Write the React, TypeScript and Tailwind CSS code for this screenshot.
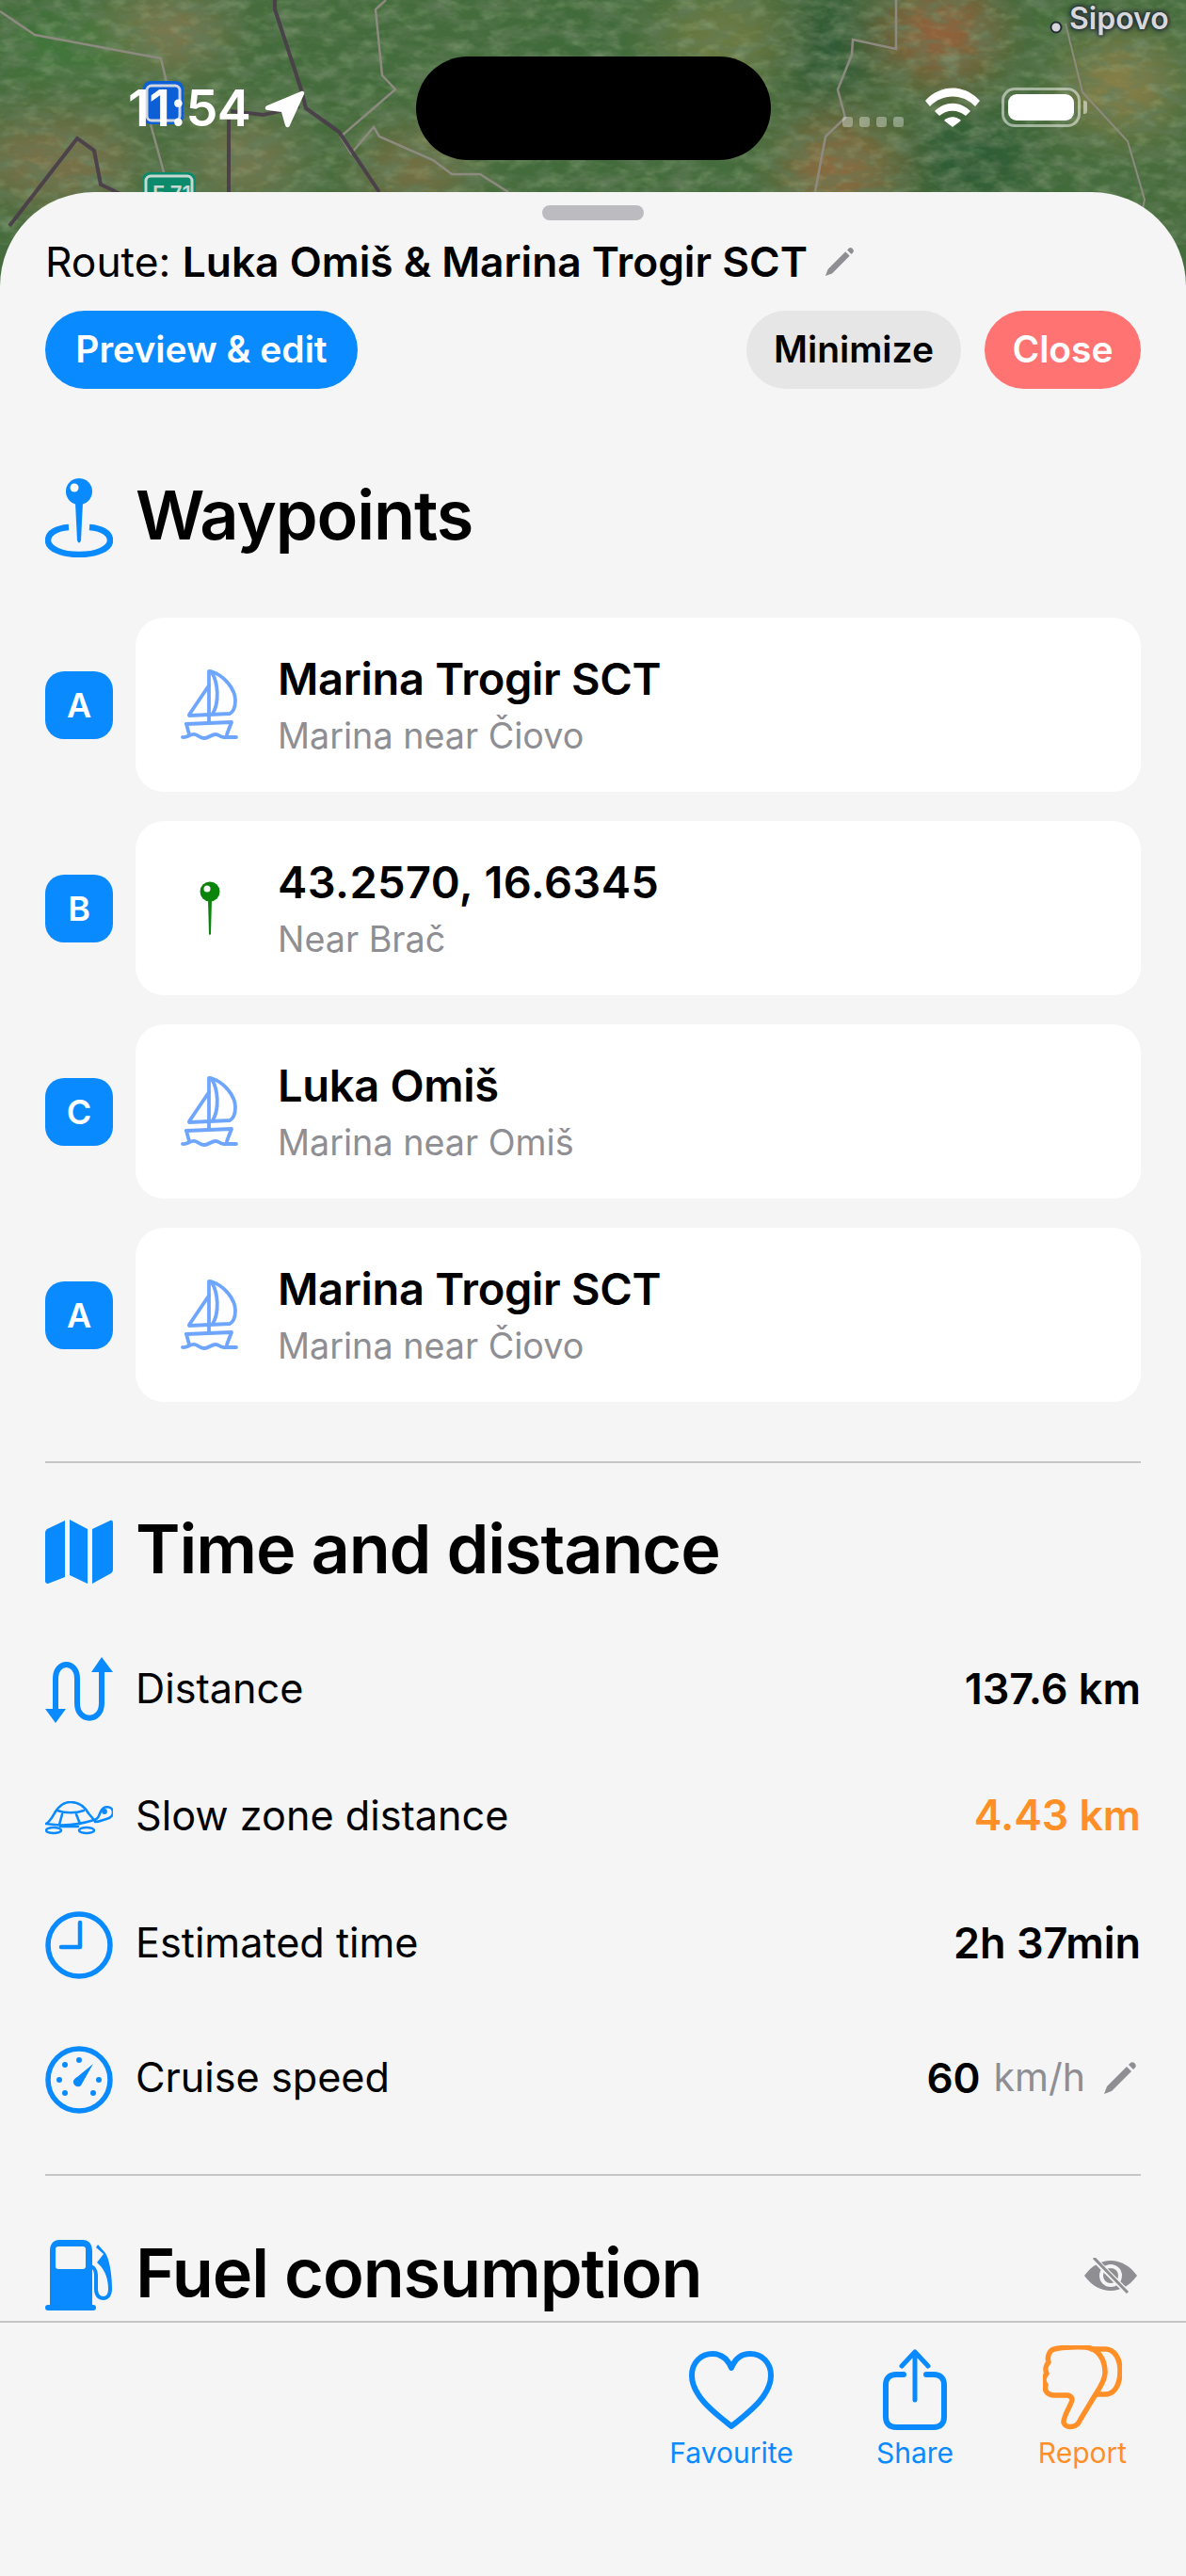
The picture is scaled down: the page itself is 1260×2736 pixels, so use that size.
const BLUE = "#0a8aff";

function MapBackdrop() {
  return (
    <svg className="absolute inset-0 h-[260px] w-full" viewBox="0 0 1260 260" preserveAspectRatio="none">
      <defs>
        <filter id="fine" x="0" y="0" width="100%" height="100%">
          <feTurbulence type="fractalNoise" baseFrequency="0.035 0.07" numOctaves="4" seed="7" />
          <feColorMatrix type="matrix" values="0 0 0 0 0.12  0 0 0 0 0.2  0 0 0 0 0.1  1.9 0 0 0 -0.72" />
        </filter>
        <filter id="light" x="0" y="0" width="100%" height="100%">
          <feTurbulence type="fractalNoise" baseFrequency="0.05 0.09" numOctaves="3" seed="21" />
          <feColorMatrix type="matrix" values="0 0 0 0 0.5  0 0 0 0 0.62  0 0 0 0 0.36  2 0 0 0 -0.95" />
        </filter>
        <filter id="soft">
          <feGaussianBlur stdDeviation="26" />
        </filter>
      </defs>
      <rect width="1260" height="260" fill="#446c3c" />
      <g filter="url(#soft)">
        <ellipse cx="170" cy="35" rx="70" ry="36" fill="#8a7a52" />
        <ellipse cx="60" cy="170" rx="90" ry="45" fill="#7d7148" />
        <ellipse cx="260" cy="170" rx="60" ry="40" fill="#7c7850" />
        <ellipse cx="80" cy="50" rx="80" ry="26" fill="#3f7a3a" />
        <ellipse cx="620" cy="90" rx="70" ry="90" fill="#3f6b3a" />
        <ellipse cx="770" cy="40" rx="70" ry="50" fill="#6d7a42" />
        <ellipse cx="1000" cy="35" rx="60" ry="50" fill="#96603a" />
        <ellipse cx="880" cy="50" rx="50" ry="70" fill="#2f5a36" />
        <ellipse cx="890" cy="180" rx="60" ry="50" fill="#8f6a40" />
        <ellipse cx="1030" cy="170" rx="70" ry="50" fill="#2f5b34" />
        <ellipse cx="1190" cy="90" rx="60" ry="50" fill="#8a8048" />
        <ellipse cx="1250" cy="200" rx="40" ry="40" fill="#4a6c3a" />
        <ellipse cx="440" cy="180" rx="60" ry="40" fill="#7a7044" />
      </g>
      <rect width="1260" height="260" filter="url(#fine)" />
      <rect width="1260" height="260" filter="url(#light)" opacity="0.3" />
      <g fill="none" stroke="#8d8a80" strokeWidth="2.5">
        <path d="M0 12 37 37 171 62 177 88M160 132 174 183" />
        <path d="M410 0 399 10 406 80 420 95 362 145 373 163 397 135 403 145 460 170 480 185 510 185 540 204" />
        <path d="M952 0V52L906 42 905 58 890 95 898 125 877 145 866 204" />
        <path d="M1132 25 1150 98 1198 150 1216 212 1210 240" strokeWidth="2" />
      </g>
      <g fill="none" stroke="#4a3c4a" strokeWidth="4" opacity="0.9">
        <path d="M292 0V10L320 95 325 115 360 140 403 204" />
        <path d="M245 118 280 122 318 113M243 125V204" />
        <path d="M10 240 82 147 100 160 107 196 130 207" />
      </g>
      <rect x="152" y="86" width="43" height="46" rx="8" fill="#0d5fd6" />
      <rect x="156" y="91" width="35" height="37" rx="5" fill="none" stroke="#cfd6e0" strokeWidth="3" />
      <rect x="151" y="183" width="57" height="40" rx="8" fill="#0b8b6c" />
      <rect x="155" y="187" width="49" height="32" rx="5" fill="none" stroke="#c8d8d2" strokeWidth="3" />
      <circle cx="1122" cy="29" r="5.5" fill="#d6d6da" stroke="#222c34" strokeWidth="2" />
    </svg>
  );
}

function StatusBar() {
  return (
    <>
      <div className="absolute left-[162px] top-[193px] text-[22px] leading-[24px] font-semibold text-[#c8d8d2]">E 71</div>
      <div className="absolute left-[136px] top-[90px] text-[54px] leading-[50px] font-semibold text-white tracking-[-0.5px]">11:54</div>
      <svg className="absolute left-[281px] top-[95px] h-[42px] w-[44px]" viewBox="0 0 44 42" fill="white">
        <path d="M3 17 39 2c2-1 4 1 3 3L27 38c-1 3-4 3-5 0l-4-14-15-2c-3 0-3-4 0-5Z" />
      </svg>
      <div className="absolute left-[1136px] top-[2px] text-[32px] leading-[36px] font-semibold text-[#d8d8dc] [text-shadow:0_0_4px_#222c34,0_0_4px_#222c34,0_0_6px_#222c34]">Sipovo</div>
      <div className="absolute left-[442px] top-[60px] h-[110px] w-[377px] rounded-[55px] bg-black" />
      <div className="absolute left-[895px] top-[124px] flex gap-[7px]">
        <div className="h-[11px] w-[11px] rounded-[3px] bg-white/35" />
        <div className="h-[11px] w-[11px] rounded-[3px] bg-white/35" />
        <div className="h-[11px] w-[11px] rounded-[3px] bg-white/35" />
        <div className="h-[11px] w-[11px] rounded-[3px] bg-white/35" />
      </div>
      <svg className="absolute left-[983px] top-[93px] h-[42px] w-[58px]" viewBox="0 0 58 42" fill="white">
        <path d="M0 14C16-4 42-4 58 14l-5 6C40 6 18 6 5 20Z" />
        <path d="M10 25c11-11 27-11 38 0l-5 5c-8-7-20-7-28 0Z" />
        <path d="M20 35c5-5 13-5 18 0l-9 7Z" />
      </svg>
      <div className="absolute left-[1064px] top-[93px] flex items-center gap-[3px]">
        <div className="h-[42px] w-[84px] rounded-[14px] border-[3px] border-white/50 p-[4px]">
          <div className="h-full w-full rounded-[9px] bg-white" />
        </div>
        <div className="h-[14px] w-[4px] rounded-r-[3px] bg-white/50" />
      </div>
    </>
  );
}

function Pencil({ className }: { className: string }) {
  return (
    <svg className={className} viewBox="0 0 36 36" fill="#8e8e93">
      <path d="M1 35 4 27 25 6 30 11 9 32Z" />
      <path d="M27 4 29 2c1-1 3-1 4 0l1 1c1 1 1 3 0 4l-2 2Z" />
    </svg>
  );
}

function Boat() {
  return (
    <svg className="h-[78px] w-[62px]" viewBox="0 0 62 78" fill="none" stroke="#6ea6ff" strokeWidth="3.8" strokeLinecap="round" strokeLinejoin="round">
      <path d="M30 3V58" />
      <path d="M32 3C46 7 58 22 58 34c0 8-2 12-6 14L9 50" />
      <path d="M33 4c7 12 8 32 1 44" />
      <path d="M30 18 9 49" />
      <path d="M6 59 54 57 49 70" />
      <path d="M6 59 9 70" />
      <path d="M2 73c5 1 8-4 13-3 4 1 6 4 10 4 5 0 7-4 12-4 4 0 6 4 10 3 3 0 6 0 12 0" />
    </svg>
  );
}

function GreenPin() {
  return (
    <svg className="h-[58px] w-[22px]" viewBox="0 0 22 58">
      <circle cx="11" cy="11" r="10.5" fill="#0b840b" />
      <circle cx="8" cy="8" r="3.5" fill="white" />
      <path d="M9 19h4l-1 37q-1 2-2 0Z" fill="#0b840b" />
    </svg>
  );
}

function WaypointCard({ badge, title, sub, pin }: { badge: string; title: string; sub: string; pin?: boolean }) {
  return (
    <div className="flex items-center gap-[24px]">
      <div className="flex h-[72px] w-[72px] items-center justify-center rounded-[20px] bg-[#0a8aff] text-[36px] font-semibold text-white">
        {badge}
      </div>
      <div className="flex h-[185px] flex-1 items-center rounded-[30px] bg-white">
        <div className="flex w-[151px] justify-center pl-[6px]">
          {pin ? <GreenPin /> : <Boat />}
        </div>
        <div>
          <div className={`pb-[2px] text-[47px] leading-[58px] font-semibold text-black ${pin ? "tracking-[0.4px]" : "tracking-[-0.3px]"}`}>{title}</div>
          <div className="mt-[4px] text-[37.7px] leading-[50px] text-[#8e8e93]">{sub}</div>
        </div>
      </div>
    </div>
  );
}

function SectionTitle({ icon, children }: { icon: React.ReactNode; children: React.ReactNode }) {
  return (
    <div className="flex h-[80px] items-center gap-[24px]">
      <div className="flex w-[72px] justify-center">{icon}</div>
      <div className="pb-[6px] text-[72px] leading-[74px] font-semibold tracking-[-1.1px] whitespace-nowrap text-black">{children}</div>
    </div>
  );
}

function StatRow({ icon, label, children }: { icon: React.ReactNode; label: string; children: React.ReactNode }) {
  return (
    <div className="flex h-[72px] items-center">
      <div className="flex w-[72px] justify-center">{icon}</div>
      <div className="ml-[24px] flex flex-1 items-center pb-[5px]">
        <div className="flex-1 text-[43.2px] text-black">{label}</div>
        {children}
      </div>
    </div>
  );
}

function FooterAction({ icon, label, color, className }: { icon: React.ReactNode; label: string; color: string; className?: string }) {
  return (
    <div className={`flex w-[150px] flex-col items-center ${className ?? ""}`}>
      <div className="flex h-[96px] items-end">{icon}</div>
      <div className={`mt-[4px] text-[30px] leading-[40px] ${color}`}>{label}</div>
    </div>
  );
}

export default function App() {
  return (
    <div className="relative flex h-[2736px] w-[1260px] flex-col overflow-hidden bg-[#446c3c] font-['Inter',sans-serif]">
      <MapBackdrop />
      <StatusBar />

      <div className="relative mt-[204px] flex min-h-0 flex-1 flex-col rounded-t-[100px] bg-[#f5f5f5]">
        <div className="mx-auto mt-[14px] h-[16px] w-[108px] rounded-full bg-[#bcbcc0]" />

        <div className="min-h-0 flex-1 overflow-hidden px-[48px]">
          <div className="mt-[19px] flex h-[50px] items-center text-[44.3px] text-black">
            <span className="whitespace-nowrap">
              Route: <span className="font-semibold">Luka Omiš &amp; Marina Trogir SCT</span>
            </span>
            <Pencil className="ml-[18px] h-[32px] w-[32px]" />
          </div>

          <div className="mt-[27px] flex h-[83px] items-stretch gap-[25px] text-[39px] font-semibold">
            <div className="flex w-[332px] items-center justify-center rounded-full bg-[#0a8aff] text-white">Preview &amp; edit</div>
            <div className="flex-1" />
            <div className="flex w-[228px] items-center justify-center rounded-full bg-[#e6e6e6] text-black">Minimize</div>
            <div className="flex w-[166px] items-center justify-center rounded-full bg-[#ff7373] text-white">Close</div>
          </div>

          <div className="mt-[97px]">
            <SectionTitle
              icon={
                <svg className="h-[84px] w-[72px]" viewBox="0 0 72 84" fill={BLUE}>
                  <circle cx="36" cy="14" r="14" />
                  <circle cx="31" cy="10" r="4.5" fill="white" />
                  <path d="M32 26h8l-2 40q-2 5-4 0Z" />
                  <path d="M25 52C12 53 3 58 3 66c0 9 15 15 33 15s33-6 33-15c0-8-9-13-22-14" fill="none" stroke={BLUE} strokeWidth="6.5" />
                </svg>
              }
            >
              Waypoints
            </SectionTitle>
          </div>

          <div className="mt-[66px] flex flex-col gap-[31px]">
            <WaypointCard badge="A" title="Marina Trogir SCT" sub="Marina near Čiovo" />
            <WaypointCard badge="B" title="43.2570, 16.6345" sub="Near Brač" pin />
            <WaypointCard badge="C" title="Luka Omiš" sub="Marina near Omiš" />
            <WaypointCard badge="A" title="Marina Trogir SCT" sub="Marina near Čiovo" />
          </div>

          <div className="mt-[63px] h-[2px] bg-[#c6c6c8]" />

          <div className="mt-[54px]">
            <SectionTitle
              icon={
                <svg className="h-[68px] w-[72px]" viewBox="0 0 72 68" fill={BLUE}>
                  <path d="M0 14c0-2 1-3 2-4L21 1v60L3 68c-2 0-3-1-3-3Z" />
                  <path d="M26 0 45 10v58L26 59Z" />
                  <path d="M50 10 69 1c2-1 3 0 3 3v49c0 2-1 3-2 4L50 68Z" />
                </svg>
              }
            >
              Time and distance
            </SectionTitle>
          </div>

          <div className="mt-[72px]">
            <StatRow
              label="Distance"
              icon={
                <svg className="h-[72px] w-[72px]" viewBox="0 0 72 72" fill="none" stroke={BLUE} strokeWidth="6" strokeLinecap="round">
                  <path d="M11 56V23C11 3 34 3 34 23v26c0 21 26 21 26 0V14" />
                  <path d="M0 55h22L11 70Z" fill={BLUE} stroke="none" />
                  <path d="M49 16h23L60 0Z" fill={BLUE} stroke="none" />
                </svg>
              }
            >
              <div className="text-[45px] font-semibold text-black">137.6 km</div>
            </StatRow>
          </div>

          <div className="mt-[63px]">
            <StatRow
              label="Slow zone distance"
              icon={
                <svg className="h-[36px] w-[72px]" viewBox="0 0 72 36" fill="none" stroke={BLUE} strokeWidth="2.6" strokeLinejoin="round" strokeLinecap="round">
                  <path d="M1 24C5 22 8 16 11 11 15 5 20 1 27 1c9 0 15 5 19 12l6 7C36 25 18 27 1 24Z" />
                  <path d="M13 10c8 3 20 3 28 0M18 14l-3 11M33 14l4 10" />
                  <path d="M52 20c4-1 5-4 7-9 3-7 13-6 13 1 0 4-3 6-7 7-4 1-8 3-12 3" />
                  <circle cx="63" cy="11" r="1.6" fill={BLUE} />
                  <ellipse cx="9" cy="31" rx="8" ry="3" />
                  <ellipse cx="44" cy="31" rx="8" ry="3" />
                  <path d="M16 27h19" />
                </svg>
              }
            >
              <div className="text-[44.6px] font-semibold text-[#ff8f26]">4.43 km</div>
            </StatRow>
          </div>

          <div className="mt-[63px]">
            <StatRow
              label="Estimated time"
              icon={
                <svg className="h-[72px] w-[72px]" viewBox="0 0 72 72" fill="none" stroke={BLUE} strokeLinecap="round" strokeLinejoin="round">
                  <circle cx="36" cy="36" r="33" strokeWidth="5.5" />
                  <path d="M37 12v26H17" strokeWidth="4.5" />
                </svg>
              }
            >
              <div className="text-[45px] font-semibold text-black">2h 37min</div>
            </StatRow>
          </div>

          <div className="mt-[71px]">
            <StatRow
              label="Cruise speed"
              icon={
                <svg className="h-[72px] w-[72px]" viewBox="0 0 72 72" fill={BLUE}>
                  <circle cx="36" cy="36" r="33" fill="none" stroke={BLUE} strokeWidth="5.5" />
                  <circle cx="36" cy="15" r="3" />
                  <circle cx="21" cy="20" r="3" />
                  <circle cx="15" cy="36" r="3" />
                  <circle cx="21" cy="50" r="3" />
                  <circle cx="51" cy="50" r="3" />
                  <circle cx="57" cy="36" r="3" />
                  <path d="M51 19 38 42c-3 3-9 0-8-5 1-2 2-3 4-4Z" />
                </svg>
              }
            >
              <div className="flex items-center">
                <span className="text-[44px] font-semibold text-black">60</span>
                <span className="ml-[14px] text-[41px] text-[#8e8e93]">km/h</span>
                <Pencil className="mr-[4px] ml-[19px] h-[36px] w-[36px]" />
              </div>
            </StatRow>
          </div>

          <div className="mt-[64px] h-[2px] bg-[#c6c6c8]" />

          <div className="mt-[66px] flex items-center justify-between">
            <SectionTitle
              icon={
                <svg className="h-[76px] w-[72px]" viewBox="0 0 72 76" fill={BLUE}>
                  <path fillRule="evenodd" d="M5 12C5 4 9 0 15 0h25c6 0 10 4 10 12v58H5ZM11 10c0-2 1-3 3-3h26c2 0 3 1 3 3v18c0 2-1 3-3 3H14c-2 0-3-1-3-3Z" />
                  <rect x="0" y="69" width="54" height="6" rx="3" />
                  <path d="M56 5 64 14C68 20 71 36 71 52c0 8-4 12-9 12-6 0-10-4-10-12V38c0-4-1-7-4-9l1-3c5 2 7 7 7 12v14c0 5 2 8 6 8 3 0 5-3 5-8 0-10-3-18-8-24l-4-4 7-9-8-7Z" />
                </svg>
              }
            >
              Fuel consumption
            </SectionTitle>
            <svg className="mr-[4px] h-[38px] w-[56px]" viewBox="0 0 56 38">
              <path d="M0 19C8 8 18 3 28 3s20 5 28 16C48 30 38 35 28 35S8 30 0 19Z" fill="#8e8e93" />
              <circle cx="28" cy="19" r="12" fill="#f5f5f5" />
              <circle cx="28" cy="19" r="8" fill="#8e8e93" />
              <path d="M9 0 47 38" stroke="#f5f5f5" strokeWidth="6" />
              <path d="M10 0 46 37" stroke="#8e8e93" strokeWidth="3" />
            </svg>
          </div>
        </div>

        <div className="flex h-[271px] justify-end gap-[28px] border-t-2 border-[#c6c6c8] pt-[18px] pr-[35px]">
          <FooterAction
            label="Favourite"
            color="text-[#0a8aff]"
            className="mr-[17px]"
            icon={
              <svg className="h-[84px] w-[90px]" viewBox="0 0 90 84" fill="none" stroke={BLUE} strokeWidth="6" strokeLinejoin="round">
                <path d="M45 80C25 64 3 47 3 26 3 12 13 3 25 3c9 0 16 5 20 15C49 8 56 3 65 3c12 0 22 9 22 23 0 21-22 38-42 54Z" />
              </svg>
            }
          />
          <FooterAction
            label="Share"
            color="text-[#0a8aff]"
            icon={
              <svg className="h-[86px] w-[68px]" viewBox="0 0 68 86" fill="none" stroke={BLUE} strokeWidth="6" strokeLinecap="round" strokeLinejoin="round">
                <path d="M22 27H14C7 27 3 31 3 38v34c0 7 4 11 11 11h40c7 0 11-4 11-11V38c0-7-4-11-11-11h-8" />
                <path d="M34 54V4M20 18 34 3l14 15" strokeWidth="5" />
              </svg>
            }
          />
          <FooterAction
            label="Report"
            color="text-[#ff8f26]"
            icon={
              <svg className="h-[90px] w-[84px]" viewBox="0 0 84 90" fill="none" stroke="#ff8f26" strokeWidth="5.5" strokeLinejoin="round" strokeLinecap="round">
                <path d="M12 4C16 3 30 1 45 2 58 3 66 14 66 29 66 37 60 46 56 52 50 62 40 78 38 82 34 88 24 88 22 82 21 76 32 60 31 57 30 54 28 53 25 53H12C4 53 1 47 3 42 0 38 1 33 4 30 2 26 3 21 6 18 4 12 7 5 12 4Z" />
                <path d="M52 4H66C76 4 82 14 82 27 82 42 76 52 66 52H58" />
              </svg>
            }
          />
        </div>
      </div>
    </div>
  );
}
